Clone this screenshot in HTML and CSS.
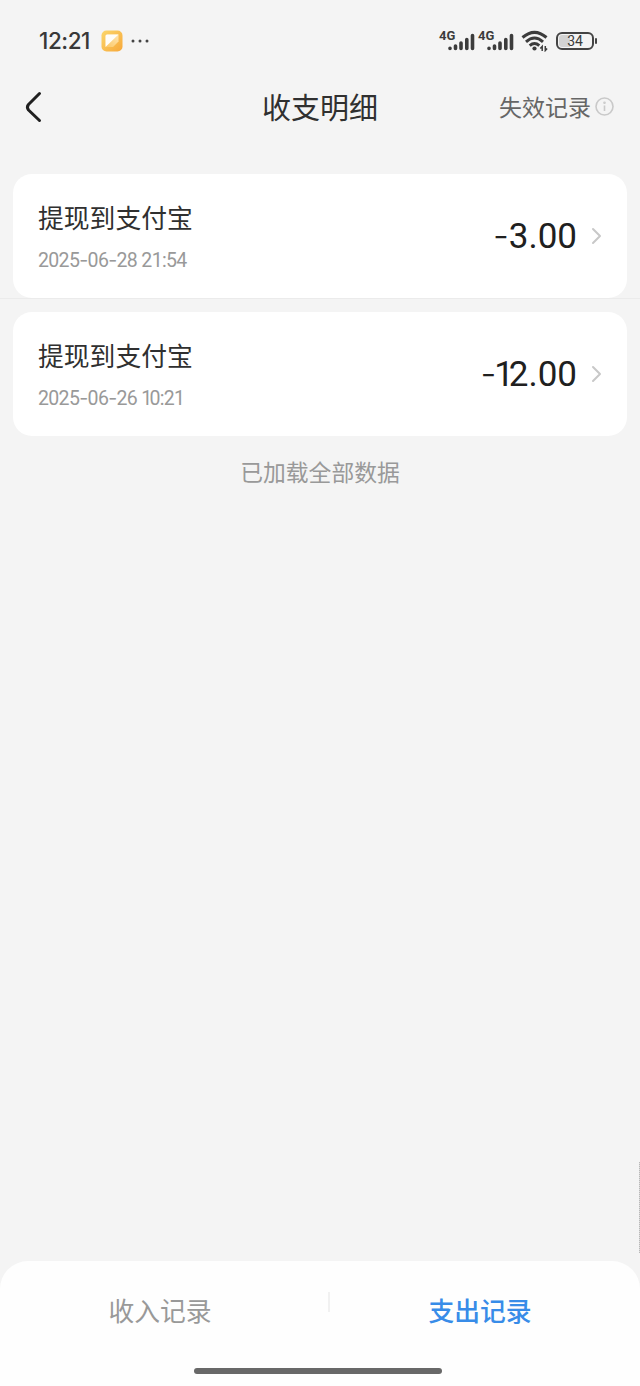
FILE: index.html
```html
<!DOCTYPE html>
<html lang="zh-CN">
<head>
<meta charset="utf-8">
<meta name="viewport" content="width=device-width, initial-scale=1">
<title>收支明细</title>
<link rel="stylesheet" href="styles.css">
</head>
<body>
<div class="screen">
  <div class="status">
    <span class="clock">12:21</span>
    <svg class="app-icon" width="22" height="22" viewBox="0 0 22 22">
      <defs>
        <linearGradient id="amber" x1="0" y1="0" x2="1" y2="1"><stop offset="0" stop-color="#fbd66a"/><stop offset="1" stop-color="#f7a83a"/></linearGradient>
        <linearGradient id="fold" x1="1" y1="0" x2="0" y2="1"><stop offset="0" stop-color="#ffe5b0"/><stop offset="1" stop-color="#fbc765"/></linearGradient>
      </defs>
      <rect x=".5" y=".5" width="21" height="21" rx="5" fill="url(#amber)"/>
      <path d="M6 4.5H17.5V11.5L12 17H4.5V6Q4.5 4.5 6 4.5Z" fill="url(#fold)"/>
      <path d="M6 4.5H17.5L4.5 17V6Q4.5 4.5 6 4.5Z" fill="#fffdf7"/>
    </svg>
    <svg class="more" width="18" height="4" viewBox="0 0 18 4" fill="#444"><circle cx="2" cy="2" r="1.5"/><circle cx="9" cy="2" r="1.5"/><circle cx="16" cy="2" r="1.5"/></svg>
    <div class="network"><span class="gen">4G</span>
      <svg class="bars" width="27" height="18" viewBox="0 0 27 18" stroke="#3c3c3c" stroke-width="3.6" stroke-linecap="round"><path d="M2 15.3V15.5M7.5 13V15.5M13 10V15.5M18.8 6.5V15.5M24.5 2.5V15.5"/></svg>
    </div>
    <div class="network second"><span class="gen">4G</span>
      <svg class="bars" width="27" height="18" viewBox="0 0 27 18" stroke="#3c3c3c" stroke-width="3.6" stroke-linecap="round"><path d="M2 15.3V15.5M7.5 13V15.5M13 10V15.5M18.8 6.5V15.5M24.5 2.5V15.5"/></svg>
    </div>
    <svg class="wifi" width="28" height="22" viewBox="0 0 28 22" fill="none" stroke="#3c3c3c" stroke-width="3">
      <path d="M1.5 7.5Q13.5-2.8 25.5 7.5M5 11.8Q13.5 4.2 22 11.8M8.7 15.6Q13.5 11.5 18.3 15.6"/>
      <circle cx="13.5" cy="18.5" r="2.1" fill="#3c3c3c" stroke="none"/>
      <path stroke-width="1.5" d="M21.2 21V16.5L19.3 18.5M24.3 16V20.500L26.1 18.5"/>
    </svg>
    <div class="battery"><span>34</span></div>
    <i class="battery-tip"></i>
  </div>

  <header class="nav">
    <svg class="back" width="20" height="34" viewBox="0 0 20 34" fill="none" stroke="#202020" stroke-width="3" stroke-linecap="round" stroke-linejoin="round"><path d="M15.5 3.5L4.5 14.5Q2.3 17.3 4.5 20L15.5 30.5"/></svg>
    <h1>收支明细</h1>
    <div class="expired"><span>失效记录</span>
      <svg width="19" height="20" viewBox="0 0 19 20" fill="none" stroke="#c9c9c9" stroke-width="1.6"><circle cx="9.5" cy="9.5" r="8.5"/><path d="M9.5 8.5V14"/><circle cx="9.5" cy="5.7" r=".5" fill="#c9c9c9"/></svg>
    </div>
  </header>

  <main class="records">
    <article class="card">
      <div class="info"><h2>提现到支付宝</h2><time>2025<span class="dash">-</span>06<span class="dash">-</span>28 21:54</time></div>
      <span class="amount"><span class="minus">-</span>3.00</span>
      <svg class="arrow" width="11" height="18" viewBox="0 0 11 18"><path d="M2 2L9 9L2 16"/></svg>
    </article>
    <div class="rule"></div>
    <article class="card">
      <div class="info"><h2>提现到支付宝</h2><time>2025<span class="dash">-</span>06<span class="dash">-</span>26 <span class="one">1</span>0:21</time></div>
      <span class="amount twelve"><span class="minus">-</span><span class="one">1</span>2.00</span>
      <svg class="arrow" width="11" height="18" viewBox="0 0 11 18"><path d="M2 2L9 9L2 16"/></svg>
    </article>
    <p class="loaded">已加载全部数据</p>
  </main>

  <div class="edge"></div>
  <footer class="dock">
    <nav class="tabs"><span class="tab">收入记录</span><i class="divider"></i><span class="tab active">支出记录</span></nav>
    <div class="home"></div>
  </footer>
</div>
</body>
</html>
```
FILE: styles.css
```css
* { box-sizing: border-box; }
body { margin: 0; background: #f4f4f4; color: #303030; font-family: "Noto Sans CJK SC", "Noto Sans", sans-serif; }
h1, h2, p { margin: 0; font-weight: 400; }
svg { display: block; flex: none; }
.screen { width: 640px; height: 1386px; display: flex; flex-direction: column; overflow: hidden; }
.status { height: 80px; padding: 1px 43px 0 39px; display: flex; align-items: center; flex: none; }
.clock { width: 62px; font: 500 22.5px/28px Inter, "Noto Sans", sans-serif; letter-spacing: -.45px; color: #383838; white-space: nowrap; }
.more { margin-left: 8px; }
.network { margin-left: auto; width: 36px; height: 24px; display: flex; align-items: flex-end; flex: none; }
.network.second { margin-left: 3px; }
.gen { align-self: flex-start; width: 9px; font: 700 13px/14px Roboto, sans-serif; color: #3c3c3c; white-space: nowrap; }
.bars { width: 27px; margin-bottom: 2px; }
.wifi { margin-left: 7px; }
.battery { width: 38px; height: 18px; margin-left: 7px; border: 2px solid #444; border-radius: 6px; background: linear-gradient(90deg, #d3d3d3 34%, transparent 34%); background-clip: content-box; padding: 1px; display: flex; align-items: center; justify-content: center; flex: none; }
.battery span { font: 400 14px/14px Roboto, sans-serif; color: #3c3c3c; }
.battery-tip { width: 2px; height: 6px; margin-left: 1px; border-radius: 1px; background: #444; }
.nav { height: 94px; padding: 10px 26px 0 24px; display: grid; grid-template-columns: 1fr auto 1fr; align-items: start; flex: none; }
.nav h1 { margin: -2px -1px 0 1px; font-size: 29px; line-height: 36px; color: #303030; }
.expired { display: flex; justify-content: flex-end; align-items: center; gap: 4px; height: 34px; font-size: 23px; color: #666; }
.expired span { line-height: 34px; margin-top: -2px; }
.records { padding: 0 13px; flex: 1; }
.card { height: 124px; padding: 0 25px; border-radius: 19px; background: #fff; display: flex; align-items: center; }
.info { flex: 1; height: 124px; padding-top: 24px; display: flex; flex-direction: column; gap: 9px; }
.info h2 { font-size: 25.8px; line-height: 37px; color: #303030; }
.info time { font: 400 19.5px/32px Roboto, "Noto Sans", sans-serif; color: #999; letter-spacing: -.65px; white-space: nowrap; }
.dash, .minus { font-family: Inter, sans-serif; }
.minus { font-weight: 300; }
.amount { margin-right: -1px; font: 400 35px/48px Roboto, "Noto Sans", sans-serif; color: #202020; }
.one { letter-spacing: -.15em; }
.twelve .minus { letter-spacing: -2px; }
.arrow { margin-left: 15px; fill: none; stroke: #c8c8c8; stroke-width: 2; stroke-linecap: round; stroke-linejoin: round; }
.rule { height: 1px; margin: 0 -13px 13px; background: #ebebeb; }
.loaded { margin-top: 18px; text-align: center; font-size: 22.8px; line-height: 36px; color: #999; }
.edge { align-self: flex-end; flex: none; width: 1px; height: 91px; margin-bottom: 8px; background: repeating-linear-gradient(#b8b8b8 0 1px, #dedede 1px 2px); }
.dock { height: 125px; flex: none; border-radius: 28px 28px 0 0; background: #fefefe; display: flex; flex-direction: column; align-items: center; }
.tabs { width: 640px; height: 107px; display: grid; grid-template-columns: 320px 1fr; position: relative; }
.tab { padding-top: 30px; text-align: center; font-size: 25.8px; line-height: 38px; color: #999; }
.tab.active { color: #388ce8; font-weight: 500; }
.divider { position: absolute; left: 328px; top: 31px; width: 2px; height: 20px; background: #f1f1f1; }
.home { width: 248px; height: 6px; border-radius: 3px; margin-left: -4px; background: #686868; }
```
